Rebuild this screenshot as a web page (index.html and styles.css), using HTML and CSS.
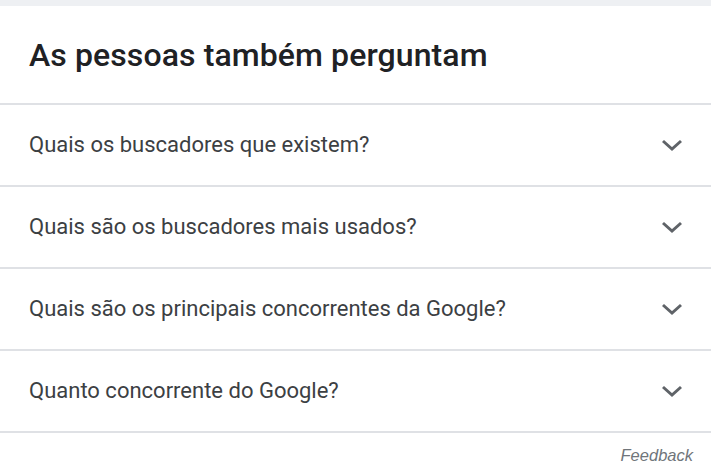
FILE: index.html
```html
<!DOCTYPE html>
<html lang="pt">
<head>
<meta charset="utf-8">
<link rel="stylesheet" href="styles.css">
</head>
<body>
<div class="topstrip"></div>
<section class="paa">
  <h2 class="paa-title">As pessoas também perguntam</h2>
  <div class="paa-list">
    <div class="paa-row"><span class="q">Quais os buscadores que existem?</span><svg class="chev" viewBox="0 0 24 24"><path d="M3 8l9 8 9-8"/></svg></div>
    <div class="paa-row"><span class="q">Quais são os buscadores mais usados?</span><svg class="chev" viewBox="0 0 24 24"><path d="M3 8l9 8 9-8"/></svg></div>
    <div class="paa-row"><span class="q">Quais são os principais concorrentes da Google?</span><svg class="chev" viewBox="0 0 24 24"><path d="M3 8l9 8 9-8"/></svg></div>
    <div class="paa-row"><span class="q">Quanto concorrente do Google?</span><svg class="chev" viewBox="0 0 24 24"><path d="M3 8l9 8 9-8"/></svg></div>
  </div>
  <div class="feedback-row"><span class="feedback">Feedback</span></div>
</section>
</body>
</html>
```

FILE: styles.css
```css
html, body {
  margin: 0;
  padding: 0;
  background: #ffffff;
}
body {
  font-family: Roboto, "Liberation Sans", Arial, sans-serif;
}
.topstrip {
  height: 6px;
  background: #eef0f3;
}
.paa {
  display: flex;
  flex-direction: column;
}
.paa-title {
  margin: 0;
  height: 97px;
  box-sizing: border-box;
  padding: 33px 0 0 29px;
  font-size: 32px;
  font-weight: 500;
  line-height: 32px;
  color: #202124;
  letter-spacing: 0.1px;
}
.paa-list {
  display: flex;
  flex-direction: column;
  border-top: 2px solid #dfe1e5;
}
.paa-row {
  height: 80px;
  display: flex;
  align-items: center;
  justify-content: space-between;
  padding: 0 27px 0 29px;
  border-bottom: 2px solid #dfe1e5;
}
.q {
  font-size: 22px;
  color: #3c4043;
  line-height: 24px;
}
.chev {
  width: 24px;
  height: 24px;
  fill: none;
  stroke: #5f6368;
  stroke-width: 3;
}
.feedback-row {
  display: flex;
  justify-content: flex-end;
  padding: 13px 18px 0 0;
}
.feedback {
  font-family: "Liberation Sans", Arial, sans-serif;
  font-style: italic;
  font-size: 16.5px;
  color: #70757a;
}
```
